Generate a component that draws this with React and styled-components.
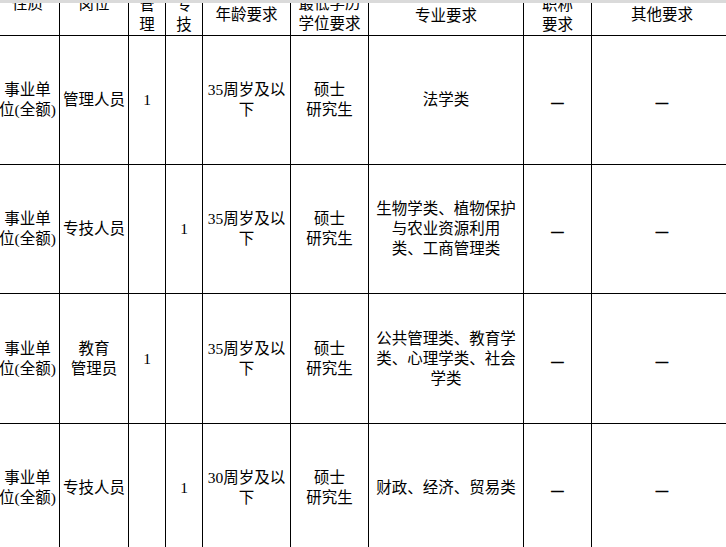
import React from 'react';
import styled, { createGlobalStyle } from 'styled-components';

const GlobalStyle = createGlobalStyle`
  html, body {
    margin: 0;
    padding: 0;
    background: #fff;
    overflow: hidden;
  }
  body {
    font-family: "Liberation Serif", "Noto Sans CJK SC", serif;
    color: #000;
  }
`;

const Page = styled.div`
  width: 726px;
  height: 547px;
  overflow: hidden;
  background: #fff;
`;

const TopStrip = styled.div`
  height: 3px;
  background: #dadada;
`;

const Table = styled.div`
  display: grid;
  grid-template-columns: 60px 69px 37px 37px 88px 78px 155px 68px 141px;
  grid-template-rows: 33px 129px 129px 130px 129px;
  width: max-content;
  font-size: 15.5px;
  line-height: 20px;
`;

const HeadCell = styled.div`
  box-sizing: border-box;
  border-right: 1px solid #000;
  border-bottom: 1px solid #000;
  display: flex;
  flex-direction: column;
  justify-content: flex-end;
  align-items: center;
  overflow: hidden;
  padding-bottom: ${(p) => p.$pb}px;
  padding-right: ${(p) => p.$pr || 0}px;
`;

const Cell = styled.div`
  box-sizing: border-box;
  border-right: 1px solid #000;
  border-bottom: 1px solid #000;
  display: flex;
  flex-direction: column;
  justify-content: center;
  align-items: center;
  padding-right: ${(p) => p.$pr || 0}px;
`;

const Line = styled.span`
  display: block;
  white-space: nowrap;
  text-align: center;
`;

const DashText = styled.span`
  display: block;
  font-family: "Noto Sans CJK SC", sans-serif;
  font-size: 15.5px;
  line-height: 20px;
  margin-top: 2px;
  color: #000;
  -webkit-text-stroke: 0.4px #000;
`;

const DASH = '—';

const headers = [
  { lines: ['性质'], pb: 21, pr: 4 },
  { lines: ['岗位'], pb: 21 },
  { lines: ['管', '理'], pb: 0 },
  { lines: ['专', '技'], pb: 0 },
  { lines: ['年龄要求'], pb: 10 },
  { lines: ['最低学历', '学位要求'], pb: 1 },
  { lines: ['专业要求'], pb: 9 },
  { lines: ['职称', '要求'], pb: 0 },
  { lines: ['其他要求'], pb: 10 },
];

const rows = [
  [
    ['事业单', '位(全额)'],
    ['管理人员'],
    ['1'],
    [],
    ['35周岁及以', '下'],
    ['硕士', '研究生'],
    ['法学类'],
    [DASH],
    [DASH],
  ],
  [
    ['事业单', '位(全额)'],
    ['专技人员'],
    [],
    ['1'],
    ['35周岁及以', '下'],
    ['硕士', '研究生'],
    ['生物学类、植物保护', '与农业资源利用', '类、工商管理类'],
    [DASH],
    [DASH],
  ],
  [
    ['事业单', '位(全额)'],
    ['教育', '管理员'],
    ['1'],
    [],
    ['35周岁及以', '下'],
    ['硕士', '研究生'],
    ['公共管理类、教育学', '类、心理学类、社会', '学类'],
    [DASH],
    [DASH],
  ],
  [
    ['事业单', '位(全额)'],
    ['专技人员'],
    [],
    ['1'],
    ['30周岁及以', '下'],
    ['硕士', '研究生'],
    ['财政、经济、贸易类'],
    [DASH],
    [DASH],
  ],
];

export default function App() {
  return (
    <Page>
      <GlobalStyle />
      <TopStrip />
      <Table>
        {headers.map((h, i) => (
          <HeadCell key={`h${i}`} $pb={h.pb} $pr={h.pr}>
            {h.lines.map((l, j) => (
              <Line key={j}>{l}</Line>
            ))}
          </HeadCell>
        ))}
        {rows.map((row, r) =>
          row.map((cell, c) => (
            <Cell key={`c${r}-${c}`} $pr={c === 0 ? 4 : 0}>
              {cell.map((l, j) =>
                l === DASH ? (
                  <DashText key={j}>{l}</DashText>
                ) : (
                  <Line key={j}>{l}</Line>
                )
              )}
            </Cell>
          ))
        )}
      </Table>
    </Page>
  );
}
